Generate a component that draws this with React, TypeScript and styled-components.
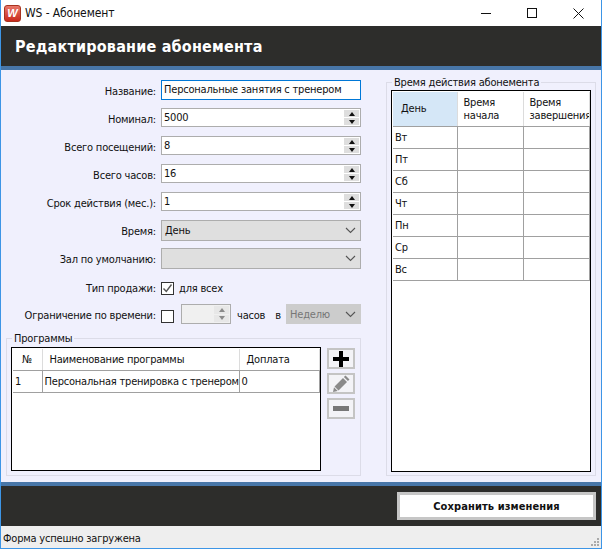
import React from 'react';
import styled, { createGlobalStyle } from 'styled-components';

const GlobalStyle = createGlobalStyle`
  html, body {
    margin: 0;
    padding: 0;
    background: #fff;
  }
  * {
    box-sizing: border-box;
  }
`;

const FONT = `"DejaVu Sans Condensed", "DejaVu Sans", sans-serif`;

const Window = styled.div`
  width: 602px;
  height: 549px;
  display: flex;
  flex-direction: column;
  border: 1px solid #3d95e6;
  border-top: none;
  font-family: ${FONT};
  font-size: 11px;
  letter-spacing: -0.2px;
  color: #111;
  overflow: hidden;
`;

const TitleBar = styled.div`
  height: 26px;
  display: flex;
  align-items: center;
  background: #fff;
  padding-left: 3px;
  flex: none;
`;

const AppIcon = styled.span`
  width: 17px;
  height: 17px;
  border-radius: 3px;
  background: linear-gradient(#e8786a, #c9291c);
  border: 1px solid #a8331f;
  color: #fff;
  font: italic bold 11px/15px "Liberation Sans", sans-serif;
  letter-spacing: 0;
  text-align: center;
  flex: none;
`;

const TitleText = styled.span`
  margin-left: 4px;
  font-size: 12px;
  letter-spacing: -0.1px;
  flex: 1;
`;

const WindowButton = styled.div`
  width: 46px;
  height: 26px;
  display: flex;
  align-items: center;
  justify-content: center;
`;

const Header = styled.div`
  height: 44px;
  flex: none;
  background: #2d2d2b;
  border-bottom: 4px solid #4876a8;
  color: #fff;
  font-size: 16px;
  font-weight: bold;
  letter-spacing: 0.2px;
  display: flex;
  align-items: center;
  padding-left: 14px;
`;

const Body = styled.div`
  flex: 1;
  display: flex;
  background: #f0f0fd;
  padding: 5px 5px 6px 5px;
  min-height: 0;
`;

const LeftColumn = styled.div`
  width: 355px;
  display: flex;
  flex-direction: column;
  padding-top: 5px;
`;

const FormGrid = styled.div`
  display: grid;
  grid-template-columns: 150px 200px;
  column-gap: 5px;
  grid-auto-rows: 20px;
  row-gap: 8px;
  margin-bottom: 7px;
`;

const Label = styled.label<{ $low?: boolean }>`
  display: flex;
  align-items: center;
  justify-content: flex-end;
  white-space: nowrap;
  padding-top: ${p => (p.$low ? 4 : 2)}px;
`;

const NameInput = styled.div`
  border: 1px solid #0078d7;
  background: #fff;
  height: 20px;
  line-height: 18px;
  padding-left: 2px;
  white-space: nowrap;
  overflow: hidden;
`;

const SpinBox = styled.div<{ $disabled?: boolean; $width?: number }>`
  height: ${p => (p.$disabled ? 20 : 19)}px;
  width: ${p => (p.$width ? `${p.$width}px` : '100%')};
  border: 1px solid #adadad;
  background: ${p => (p.$disabled ? '#f0f0f0' : '#fff')};
  display: flex;
  justify-content: space-between;
  padding: 0 1px 0 2px;
  line-height: 17px;
`;

const SpinButtons = styled.div<{ $disabled?: boolean }>`
  width: 15px;
  display: flex;
  flex-direction: column;
  gap: 1px;
  padding: 1px 0;
  opacity: ${p => (p.$disabled ? 0.45 : 1)};
`;

const SpinButton = styled.div`
  flex: 1;
  background: #dedede;
  display: flex;
  align-items: center;
  justify-content: center;
`;

const ArrowUp = styled.span`
  border-left: 3px solid transparent;
  border-right: 3px solid transparent;
  border-bottom: 4px solid #111;
`;

const ArrowDown = styled(ArrowUp)`
  border-bottom: none;
  border-top: 4px solid #111;
`;

const Select = styled.div<{ $disabled?: boolean; $width?: number; $tall?: boolean }>`
  height: ${p => (p.$tall ? 21 : 20)}px;
  width: ${p => (p.$width ? `${p.$width}px` : '100%')};
  background: ${p => (p.$disabled ? '#cccccc' : '#dfdfdf')};
  border: 1px solid ${p => (p.$disabled ? '#cccccc' : '#adadad')};
  color: ${p => (p.$disabled ? '#777' : '#111')};
  display: flex;
  align-items: center;
  justify-content: space-between;
  padding: 0 4px 0 3px;
`;

const CheckRow = styled.div`
  display: flex;
  align-items: flex-start;
  gap: 5px;
  padding-top: 6px;
`;

const CheckBox = styled.span`
  width: 13px;
  height: 13px;
  flex: none;
  background: #fff;
  border: 1px solid #333;
  display: flex;
  align-items: center;
  justify-content: center;
`;

const LimitRow = styled.div`
  display: flex;
  align-items: center;
  white-space: nowrap;
`;

const LimitText = styled.span<{ $left: number }>`
  margin-left: ${p => p.$left}px;
  padding-top: 3px;
`;

const LimitCheck = styled(CheckBox)`
  margin-top: 5px;
`;

const SpinGap = styled.div`
  margin-left: 7px;
`;

const SelectGap = styled.div`
  margin-left: auto;
`;

const Group = styled.fieldset`
  margin: 0;
  padding: 0;
  min-width: 0;
  border: 1px solid #dcdce8;
  flex: 1;
`;

const Legend = styled.legend`
  margin-left: 5px;
  padding: 0 2px;
  height: 14px;
  line-height: 16px;
  font-size: 11px;
`;

const ProgramsBody = styled.div`
  display: flex;
  height: 129px;
  padding: 2px 5px 3px 4px;
  gap: 6px;
`;

const TableFrame = styled.div<{ $width: number }>`
  width: ${p => p.$width}px;
  height: 100%;
  background: #fff;
  border: 1px solid #000;
  padding: 1px;
  overflow: hidden;
  flex: none;
`;

const Table = styled.table`
  border-collapse: collapse;
  table-layout: fixed;
  width: 100%;
`;

const HeaderCell = styled.th<{ $width: number; $height?: number; $active?: boolean; $pad?: number }>`
  width: ${p => p.$width}px;
  height: ${p => p.$height ?? 21}px;
  font-weight: normal;
  text-align: left;
  padding: 0 0 0 ${p => p.$pad ?? 6}px;
  background: ${p => (p.$active ? '#d5e7f7' : '#fff')};
  border-right: 1px solid #dcdcdc;
  border-bottom: 1px solid #a0a0a0;
  white-space: nowrap;
  overflow: hidden;
  line-height: 13px;
`;

const Cell = styled.td`
  height: 22px;
  padding: 0 0 0 2px;
  border-right: 1px solid #a0a0a0;
  border-bottom: 1px solid #a0a0a0;
  white-space: nowrap;
  overflow: hidden;
`;

const SideButtons = styled.div`
  display: flex;
  flex-direction: column;
  gap: 4px;
  padding-top: 1px;
`;

const IconButton = styled.div`
  width: 28px;
  height: 21px;
  background: #f3f3f7;
  border: 2px solid #c4c4c4;
  display: flex;
  align-items: center;
  justify-content: center;
`;

const RightColumn = styled.div`
  width: 210px;
  margin-left: 25px;
  display: flex;
`;

const TimeBody = styled.div`
  height: 386px;
  padding: 1px 4px 3px 4px;
`;

const Footer = styled.div`
  height: 44px;
  flex: none;
  background: #2d2d2b;
  border-top: 4px solid #4876a8;
  display: flex;
  justify-content: flex-end;
  align-items: flex-start;
  padding: 6px 5px 0 0;
`;

const SaveButton = styled.button`
  width: 199px;
  height: 28px;
  background: #fff;
  border: 3px solid #c6c6c6;
  font-family: ${FONT};
  font-size: 11px;
  font-weight: bold;
  letter-spacing: 0.1px;
  color: #111;
  padding: 0;
`;

const StatusBar = styled.div`
  height: 22px;
  flex: none;
  background: #eeeeee;
  display: flex;
  align-items: center;
  padding: 2px 0 0 2px;
  position: relative;
`;

const Grip = styled.svg`
  position: absolute;
  right: 1px;
  bottom: 1px;
`;

const days = ['Вт', 'Пт', 'Сб', 'Чт', 'Пн', 'Ср', 'Вс'];

const Chevron = () => (
  <svg width="11" height="7" viewBox="0 0 11 7" fill="none" stroke="#555" strokeWidth="1.1">
    <path d="M1 1l4.5 4.5L10 1" />
  </svg>
);

const Spin = ({ value, disabled, width }: { value?: string; disabled?: boolean; width?: number }) => (
  <SpinBox $disabled={disabled} $width={width}>
    <span>{value}</span>
    <SpinButtons $disabled={disabled}>
      <SpinButton><ArrowUp /></SpinButton>
      <SpinButton><ArrowDown /></SpinButton>
    </SpinButtons>
  </SpinBox>
);

const App = () => (
  <>
    <GlobalStyle />
    <Window>
      <TitleBar>
        <AppIcon>W</AppIcon>
        <TitleText>WS - Абонемент</TitleText>
        <WindowButton>
          <svg width="10" height="10" viewBox="0 0 10 10" stroke="#111">
            <path d="M0 5.5h10" />
          </svg>
        </WindowButton>
        <WindowButton>
          <svg width="10" height="10" viewBox="0 0 10 10" fill="none" stroke="#111">
            <rect x="0.5" y="0.5" width="9" height="9" />
          </svg>
        </WindowButton>
        <WindowButton>
          <svg width="11" height="11" viewBox="0 0 11 11" stroke="#111">
            <path d="M0.5 0.5l10 10M10.5 0.5l-10 10" />
          </svg>
        </WindowButton>
      </TitleBar>
      <Header>Редактирование абонемента</Header>
      <Body>
        <LeftColumn>
          <FormGrid>
            <Label>Название:</Label>
            <NameInput>Персональные занятия с тренером</NameInput>
            <Label>Номинал:</Label>
            <Spin value="5000" />
            <Label>Всего посещений:</Label>
            <Spin value="8" />
            <Label>Всего часов:</Label>
            <Spin value="16" />
            <Label>Срок действия (мес.):</Label>
            <Spin value="1" />
            <Label>Время:</Label>
            <Select $tall>
              <span>День</span>
              <Chevron />
            </Select>
            <Label>Зал по умолчанию:</Label>
            <Select $tall>
              <span />
              <Chevron />
            </Select>
            <Label $low>Тип продажи:</Label>
            <CheckRow>
              <CheckBox>
                <svg width="11" height="11" viewBox="0 0 11 11" fill="none" stroke="#555" strokeWidth="1.4">
                  <path d="M1.5 5.5l2.8 3L9.5 1.5" />
                </svg>
              </CheckBox>
              <span>для всех</span>
            </CheckRow>
            <Label>Ограничение по времени:</Label>
            <LimitRow>
              <LimitCheck />
              <SpinGap>
                <Spin disabled width={50} />
              </SpinGap>
              <LimitText $left={6}>часов</LimitText>
              <LimitText $left={10}>в</LimitText>
              <SelectGap>
                <Select $disabled $width={75}>
                  <span>Неделю</span>
                  <Chevron />
                </Select>
              </SelectGap>
            </LimitRow>
          </FormGrid>
          <Group>
            <Legend>Программы</Legend>
            <ProgramsBody>
              <TableFrame $width={310}>
                <Table>
                  <thead>
                    <tr>
                      <HeaderCell $width={29} $pad={9}>№</HeaderCell>
                      <HeaderCell $width={197} $pad={7}>Наименование программы</HeaderCell>
                      <HeaderCell $width={80} $pad={7}>Доплата</HeaderCell>
                    </tr>
                  </thead>
                  <tbody>
                    <tr>
                      <Cell>1</Cell>
                      <Cell>Персональная тренировка с тренером</Cell>
                      <Cell>0</Cell>
                    </tr>
                  </tbody>
                </Table>
              </TableFrame>
              <SideButtons>
                <IconButton>
                  <svg width="16" height="16" viewBox="0 0 16 16" fill="#000">
                    <path d="M6 0h4v6h6v4h-6v6H6v-6H0V6h6z" />
                  </svg>
                </IconButton>
                <IconButton>
                  <svg width="17" height="17" viewBox="0 0 17 17" fill="#8a8a8a">
                    <path d="M12.5 0.5l4 4-1.6 1.6-4-4zM10 3l4 4-8.5 8.5-4-4zM1 12.3l3.7 3.7-4.7 1z" />
                  </svg>
                </IconButton>
                <IconButton>
                  <svg width="16" height="5" viewBox="0 0 16 5" fill="#777">
                    <rect width="16" height="5" />
                  </svg>
                </IconButton>
              </SideButtons>
            </ProgramsBody>
          </Group>
        </LeftColumn>
        <RightColumn>
          <Group>
            <Legend>Время действия абонемента</Legend>
            <TimeBody>
              <TableFrame $width={200}>
                <Table>
                  <thead>
                    <tr>
                      <HeaderCell $width={64} $height={34} $active $pad={8}>День</HeaderCell>
                      <HeaderCell $width={66} $height={34}>Время<br />начала</HeaderCell>
                      <HeaderCell $width={66} $height={34}>Время<br />завершения</HeaderCell>
                    </tr>
                  </thead>
                  <tbody>
                    {days.map(day => (
                      <tr key={day}>
                        <Cell>{day}</Cell>
                        <Cell />
                        <Cell />
                      </tr>
                    ))}
                  </tbody>
                </Table>
              </TableFrame>
            </TimeBody>
          </Group>
        </RightColumn>
      </Body>
      <Footer>
        <SaveButton>Сохранить изменения</SaveButton>
      </Footer>
      <StatusBar>
        Форма успешно загружена
        <Grip width="10" height="10" viewBox="0 0 10 10" fill="#aaa">
          <rect x="7" y="1" width="2" height="2" />
          <rect x="4" y="4" width="2" height="2" />
          <rect x="7" y="4" width="2" height="2" />
          <rect x="1" y="7" width="2" height="2" />
          <rect x="4" y="7" width="2" height="2" />
          <rect x="7" y="7" width="2" height="2" />
        </Grip>
      </StatusBar>
    </Window>
  </>
);

export default App;
